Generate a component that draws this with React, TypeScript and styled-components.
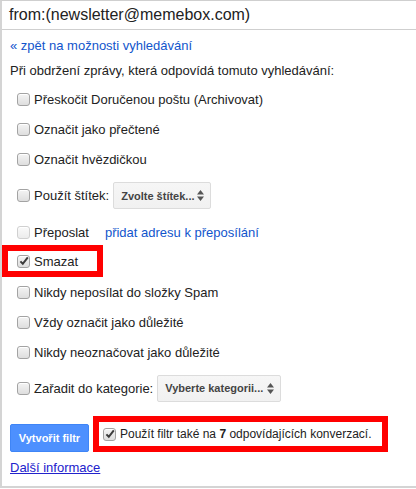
import React from "react";
import styled, { createGlobalStyle, css } from "styled-components";

const Global = createGlobalStyle`
  html, body { margin: 0; padding: 0; background: #fff; }
  body { font-family: "Liberation Sans", Arial, sans-serif; color: #222; }
`;

const Frame = styled.div`
  box-sizing: border-box;
  width: 416px;
  height: 488px;
  border-top: 1px solid #cfcfcf;
  border-left: 2px solid #d4d4d4;
  border-bottom: 2px solid #d4d4d4;
  display: flex;
  flex-direction: column;
`;

const SearchBar = styled.div`
  box-sizing: border-box;
  height: 29px;
  border-bottom: 1px solid #cfcfcf;
  padding-left: 7px;
  display: flex;
  align-items: center;
  font-size: 16px;
  color: #222;
`;

const Panel = styled.div`
  display: flex;
  flex-direction: column;
  padding-top: 8px;
  font-size: 13px;
`;

const BackLink = styled.a`
  color: #15c;
  text-decoration: none;
  height: 16px;
  line-height: 16px;
  margin-left: 8px;
  cursor: pointer;
`;

const Heading = styled.div`
  height: 16px;
  line-height: 16px;
  margin: 9px 0 5px 8px;
  color: #222;
`;

const Row = styled.div<{ $h?: number; $hl?: boolean }>`
  box-sizing: border-box;
  display: flex;
  align-items: center;
  height: ${(p) => p.$h ?? 30}px;
  padding-left: 15px;
  color: #222;
  ${(p) =>
    p.$hl &&
    css`
      width: 101px;
      height: 32px;
      margin: -2px 0 0 0;
      border: 6px solid #ff0000;
      padding-left: 9px;
    `}
`;

const Label = styled.span`
  white-space: nowrap;
`;

const Box = styled.span<{ $disabled?: boolean }>`
  box-sizing: border-box;
  width: 13px;
  height: 13px;
  flex: 0 0 13px;
  border-radius: 3px;
  border: 1px solid ${(p) => (p.$disabled ? "#d0d0d0" : "#a3a3a3")};
  background: ${(p) =>
    p.$disabled
      ? "linear-gradient(#fafafa, #ececec)"
      : "linear-gradient(#f4f4f4, #dedede)"};
  box-shadow: inset 0 1px 0 #fff;
  margin-right: 4px;
  display: flex;
  align-items: center;
  justify-content: center;
`;

const Check = ({ checked, disabled }: { checked?: boolean; disabled?: boolean }) => (
  <Box $disabled={disabled}>
    {checked && (
      <svg width="10" height="10" viewBox="0 0 10 10">
        <path d="M1.4 5.4 L3.8 7.8 L8.8 1.4" fill="none" stroke="#3c3c3c" strokeWidth="2" />
      </svg>
    )}
  </Box>
);

const Select = styled.div<{ $w: number }>`
  box-sizing: border-box;
  width: ${(p) => p.$w}px;
  height: 27px;
  margin-left: 4px;
  border: 1px solid #dcdcdc;
  border-radius: 2px;
  background: linear-gradient(#f6f6f6, #f1f1f1);
  color: #444;
  font-size: 11px;
  font-weight: bold;
  display: flex;
  align-items: center;
  justify-content: space-between;
  padding: 0 6px 0 7px;
  white-space: nowrap;
`;

const Arrows = () => (
  <svg width="7" height="11" viewBox="0 0 7 11">
    <path d="M0 4.5 L3.5 0 L7 4.5 Z M0 6.5 L3.5 11 L7 6.5 Z" fill="#555" />
  </svg>
);

const ForwardLink = styled.a`
  color: #15c;
  margin-left: 16px;
  cursor: pointer;
  white-space: nowrap;
`;

const ActionRow = styled.div`
  display: flex;
  align-items: center;
  margin-top: 7px;
  padding-left: 8px;
  height: 36px;
`;

const CreateButton = styled.button`
  box-sizing: border-box;
  width: 79px;
  height: 28px;
  margin-top: 8px;
  border: 1px solid #3f85f6;
  border-radius: 2px;
  background: #4d90fe;
  color: #fff;
  font-family: "Liberation Sans", Arial, sans-serif;
  font-size: 11px;
  font-weight: bold;
  padding: 0;
`;

const ApplyBox = styled.div`
  box-sizing: border-box;
  height: 36px;
  width: 295px;
  margin-left: 4px;
  border: 6px solid #ff0000;
  display: flex;
  align-items: center;
  padding-left: 4px;
  color: #222;
  font-size: 12px;
`;

const MoreLink = styled.a`
  color: #22c;
  text-decoration: underline;
  margin: 8px 0 0 8px;
  height: 16px;
  line-height: 16px;
  align-self: flex-start;
  cursor: pointer;
`;

export default function App() {
  return (
    <>
      <Global />
      <Frame>
        <SearchBar>from:(newsletter@memebox.com)</SearchBar>
        <Panel>
          <BackLink>« zpět na možnosti vyhledávání</BackLink>
          <Heading>Při obdržení zprávy, která odpovídá tomuto vyhledávání:</Heading>
          <Row>
            <Check />
            <Label>Přeskočit Doručenou poštu (Archivovat)</Label>
          </Row>
          <Row>
            <Check />
            <Label>Označit jako přečtené</Label>
          </Row>
          <Row>
            <Check />
            <Label>Označit hvězdičkou</Label>
          </Row>
          <Row $h={43}>
            <Check />
            <Label>Použít štítek:</Label>
            <Select $w={98}>
              Zvolte štítek...
              <Arrows />
            </Select>
          </Row>
          <Row>
            <Check disabled />
            <Label>Přeposlat</Label>
            <ForwardLink>přidat adresu k přeposílání</ForwardLink>
          </Row>
          <Row $hl>
            <Check checked />
            <Label>Smazat</Label>
          </Row>
          <Row>
            <Check />
            <Label>Nikdy neposílat do složky Spam</Label>
          </Row>
          <Row>
            <Check />
            <Label>Vždy označit jako důležité</Label>
          </Row>
          <Row>
            <Check />
            <Label>Nikdy neoznačovat jako důležité</Label>
          </Row>
          <Row $h={42}>
            <Check />
            <Label>Zařadit do kategorie:</Label>
            <Select $w={124}>
              Vyberte kategorii...
              <Arrows />
            </Select>
          </Row>
          <ActionRow>
            <CreateButton>Vytvořit filtr</CreateButton>
            <ApplyBox>
              <Check checked />
              <Label>
                Použít filtr také na <b>7</b> odpovídajících konverzací.
              </Label>
            </ApplyBox>
          </ActionRow>
          <MoreLink>Další informace</MoreLink>
        </Panel>
      </Frame>
    </>
  );
}
